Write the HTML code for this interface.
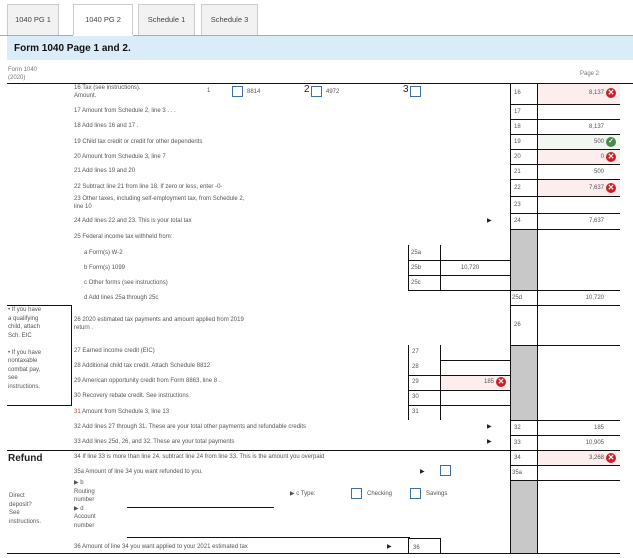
<!DOCTYPE html><html><head><style>
body{margin:0;width:633px;height:558px;background:#fff;font-family:"Liberation Sans",sans-serif;position:relative;overflow:hidden}
div{position:absolute;box-sizing:border-box}
.t{font-size:6px;color:#555;white-space:nowrap;line-height:8px}
.tab{top:4px;height:31px;background:#f2f2f2;border:1px solid #ccc;border-bottom:none;font-size:7.5px;color:#444;text-align:center;line-height:30px}
.hl{height:1px;background:#111}
.vl{width:1px;background:#111}
.gray{background:#c8c8c8}
.pink{background:#fdeeee}
.num{font-size:6px;color:#555;text-align:right;line-height:8px}
.x{width:10px;height:10px;border-radius:5px;background:#c8202a;color:#fff;font-size:8px;line-height:10px;text-align:center;font-weight:bold}
.ok{width:10px;height:10px;border-radius:5px;background:#4a8a4a;color:#fff;font-size:7px;line-height:10px;text-align:center;font-weight:bold}
.cb{width:11px;height:11px;border:1px solid #3a6fa8;background:#fff}
.arr{font-size:6px;color:#222;line-height:8px}
</style></head><body>
<div class="tab" style="left:7px;width:52px">1040 PG 1</div>
<div class="tab" style="left:73px;width:60px;background:#fff;height:32px">1040 PG 2</div>
<div class="tab" style="left:138px;width:57px">Schedule 1</div>
<div class="tab" style="left:201px;width:57px">Schedule 3</div>
<div style="left:0;top:35px;width:633px;height:1px;background:#aaa"></div>
<div style="left:73px;top:35px;width:60px;height:1px;background:#fff"></div>
<div style="left:7px;top:36px;width:626px;height:24px;background:#d9ecf8;font-size:10px;font-weight:bold;color:#111;padding:7px 0 0 7px">Form 1040 Page 1 and 2.</div>
<div class="t" style="left:8px;top:66px;color:#777">Form 1040<br>(2020)</div>
<div class="t" style="left:580px;top:70px;color:#777">Page 2</div>
<div class="hl" style="left:7px;top:83px;width:626px"></div>

<div class="vl" style="left:510px;top:83px;height:215px"></div>
<div class="vl" style="left:537px;top:83px;height:470px"></div>
<div class="vl" style="left:510px;top:290px;height:263px"></div>
<div class="pink" style="left:538px;top:84px;width:82px;height:20px"></div>
<div style="left:538px;top:135px;width:82px;height:14px;background:#f2f7f2"></div>
<div class="pink" style="left:538px;top:150px;width:82px;height:14px"></div>
<div class="pink" style="left:538px;top:180px;width:82px;height:16px"></div>
<div class="pink" style="left:538px;top:451px;width:82px;height:14px"></div>
<div class="gray" style="left:511px;top:230px;width:26px;height:60px"></div>
<div class="gray" style="left:511px;top:346px;width:26px;height:74px"></div>
<div class="gray" style="left:511px;top:481px;width:26px;height:72px"></div>

<div class="hl" style="left:510px;top:104px;width:110px"></div>
<div class="hl" style="left:510px;top:119px;width:110px"></div>
<div class="hl" style="left:510px;top:134px;width:110px"></div>
<div class="hl" style="left:510px;top:149px;width:110px"></div>
<div class="hl" style="left:510px;top:164px;width:110px"></div>
<div class="hl" style="left:510px;top:179px;width:110px"></div>
<div class="hl" style="left:510px;top:196px;width:110px"></div>
<div class="hl" style="left:510px;top:213px;width:110px"></div>
<div class="hl" style="left:510px;top:229px;width:110px"></div>
<div class="hl" style="left:408px;top:290px;width:212px"></div>
<div class="hl" style="left:510px;top:305px;width:110px"></div>
<div class="hl" style="left:510px;top:345px;width:110px"></div>
<div class="hl" style="left:510px;top:420px;width:110px"></div>
<div class="hl" style="left:510px;top:435px;width:110px"></div>
<div class="hl" style="left:7px;top:450px;width:613px"></div>
<div class="hl" style="left:510px;top:465px;width:110px"></div>
<div class="hl" style="left:510px;top:480px;width:110px"></div>
<div class="hl" style="left:7px;top:553px;width:613px"></div>

<div class="t" style="left:514px;top:89px">16</div><div class="num" style="left:540px;top:89px;width:64px">8,137</div><div class="x" style="left:606px;top:88px">✕</div>
<div class="t" style="left:514px;top:108px">17</div>
<div class="t" style="left:514px;top:123px">18</div><div class="num" style="left:540px;top:123px;width:64px">8,137</div>
<div class="t" style="left:514px;top:138px">19</div><div class="num" style="left:540px;top:138px;width:64px">500</div><div class="ok" style="left:606px;top:137px">✓</div>
<div class="t" style="left:514px;top:153px">20</div><div class="num" style="left:540px;top:153px;width:64px">0</div><div class="x" style="left:606px;top:152px">✕</div>
<div class="t" style="left:514px;top:168px">21</div><div class="num" style="left:540px;top:168px;width:64px">500</div>
<div class="t" style="left:514px;top:184px">22</div><div class="num" style="left:540px;top:184px;width:64px">7,637</div><div class="x" style="left:606px;top:183px">✕</div>
<div class="t" style="left:514px;top:201px">23</div>
<div class="t" style="left:514px;top:217px">24</div><div class="num" style="left:540px;top:217px;width:64px">7,637</div>
<div class="t" style="left:512px;top:294px">25d</div><div class="num" style="left:540px;top:294px;width:64px">10,720</div>
<div class="t" style="left:514px;top:321px">26</div>
<div class="t" style="left:514px;top:424px">32</div><div class="num" style="left:540px;top:424px;width:64px">185</div>
<div class="t" style="left:514px;top:439px">33</div><div class="num" style="left:540px;top:439px;width:64px">10,905</div>
<div class="t" style="left:514px;top:454px">34</div><div class="num" style="left:540px;top:454px;width:64px">3,268</div><div class="x" style="left:606px;top:453px">✕</div>
<div class="t" style="left:512px;top:469px">35a</div>

<div style="left:408px;top:245px;width:102px;height:45px;border-left:1px solid #111"></div>
<div class="vl" style="left:440px;top:245px;height:45px"></div>
<div class="hl" style="left:408px;top:260px;width:102px"></div>
<div class="hl" style="left:408px;top:275px;width:102px"></div>
<div class="t" style="left:411px;top:249px">25a</div>
<div class="t" style="left:411px;top:264px">25b</div><div class="num" style="left:440px;top:264px;width:60px;text-align:center">10,720</div>
<div class="t" style="left:411px;top:279px">25c</div>

<div class="vl" style="left:408px;top:345px;height:75px"></div>
<div class="vl" style="left:440px;top:345px;height:75px"></div>
<div class="pink" style="left:441px;top:376px;width:69px;height:14px"></div>
<div class="hl" style="left:440px;top:360px;width:70px"></div>
<div class="hl" style="left:408px;top:375px;width:102px"></div>
<div class="hl" style="left:408px;top:390px;width:102px"></div>
<div class="hl" style="left:408px;top:405px;width:102px"></div>
<div class="t" style="left:412px;top:348px">27</div>
<div class="t" style="left:412px;top:363px">28</div>
<div class="t" style="left:412px;top:378px">29</div><div class="num" style="left:440px;top:378px;width:54px">185</div><div class="x" style="left:496px;top:377px">✕</div>
<div class="t" style="left:412px;top:393px">30</div>
<div class="t" style="left:412px;top:408px">31</div>

<div style="left:408px;top:538px;width:33px;height:16px;border:1px solid #111;border-bottom:none"></div>
<div class="t" style="left:413px;top:544px">36</div>

<div style="left:7px;top:305px;width:65px;height:101px;border:1px solid #111;border-left:none"></div>
<div class="t" style="left:8px;top:306px;line-height:8.5px">• If you have<br>a qualifying<br>child, attach<br>Sch. EIC<br><br>• If you have<br>nontaxable<br>combat pay,<br>see<br>instructions.</div>
<div style="left:8px;top:453px;font-size:10px;font-weight:bold;color:#222">Refund</div>
<div class="t" style="left:9px;top:492px;line-height:8.5px">Direct<br>deposit?<br>See<br>instructions.</div>

<div class="t" style="left:74px;top:84px">16 Tax (see instructions).<br>Amount.</div>
<div class="t" style="left:207px;top:87px">1</div><div class="cb" style="left:232px;top:86px"></div><div class="t" style="left:247px;top:88px">8814</div>
<div style="left:304px;top:84px;font-size:10px;color:#222">2</div><div class="cb" style="left:311px;top:86px"></div><div class="t" style="left:326px;top:88px">4972</div>
<div style="left:403px;top:84px;font-size:10px;color:#222">3</div><div class="cb" style="left:410px;top:86px"></div>
<div class="t" style="left:74px;top:107px">17 Amount from Schedule 2, line 3 . . .</div>
<div class="t" style="left:74px;top:122px">18 Add lines 16 and 17 .</div>
<div class="t" style="left:74px;top:138px">19 Child tax credit or credit for other dependents</div>
<div class="t" style="left:74px;top:153px">20 Amount from Schedule 3, line 7</div>
<div class="t" style="left:74px;top:167px">21 Add lines 19 and 20</div>
<div class="t" style="left:74px;top:183px">22 Subtract line 21 from line 18. If zero or less, enter -0-</div>
<div class="t" style="left:74px;top:195px">23 Other taxes, including self-employment tax, from Schedule 2,<br>line 10</div>
<div class="t" style="left:74px;top:217px">24 Add lines 22 and 23. This is your total tax</div><div class="arr" style="left:487px;top:217px">▶</div>
<div class="t" style="left:74px;top:233px">25 Federal income tax withheld from:</div>
<div class="t" style="left:84px;top:249px">a Form(s) W-2</div>
<div class="t" style="left:84px;top:264px">b Form(s) 1099</div>
<div class="t" style="left:84px;top:279px">c Other forms (see instructions)</div>
<div class="t" style="left:84px;top:294px">d Add lines 25a through 25c</div>
<div class="t" style="left:74px;top:316px">26 2020 estimated tax payments and amount applied from 2019<br>return .</div>
<div class="t" style="left:74px;top:347px">27 Earned income credit (EIC)</div>
<div class="t" style="left:74px;top:362px">28 Additional child tax credit. Attach Schedule 8812</div>
<div class="t" style="left:74px;top:377px">29 American opportunity credit from Form 8863, line 8 .</div>
<div class="t" style="left:74px;top:392px">30 Recovery rebate credit. See instructions</div>
<div class="t" style="left:74px;top:408px"><span style="color:#b44">31</span> Amount from Schedule 3, line 13</div>
<div class="t" style="left:74px;top:423px">32 Add lines 27 through 31. These are your total other payments and refundable credits</div><div class="arr" style="left:487px;top:423px">▶</div>
<div class="t" style="left:74px;top:438px">33 Add lines 25d, 26, and 32. These are your total payments</div><div class="arr" style="left:487px;top:438px">▶</div>
<div class="t" style="left:74px;top:453px">34 If line 33 is more than line 24, subtract line 24 from line 33. This is the amount you overpaid</div>
<div class="t" style="left:74px;top:468px">35a Amount of line 34 you want refunded to you.</div><div class="arr" style="left:420px;top:468px">▶</div><div class="cb" style="left:440px;top:465px"></div>
<div class="t" style="left:74px;top:479px;line-height:8.5px">▶ b<br>Routing<br>number<br>▶ d<br>Account<br>number</div>
<div class="hl" style="left:127px;top:507px;width:147px"></div>
<div class="hl" style="left:127px;top:537px;width:283px"></div>
<div class="t" style="left:290px;top:490px">▶ c Type:</div>
<div class="cb" style="left:351px;top:488px"></div><div class="t" style="left:367px;top:490px">Checking</div>
<div class="cb" style="left:410px;top:488px"></div><div class="t" style="left:426px;top:490px">Savings</div>
<div class="t" style="left:74px;top:543px">36 Amount of line 34 you want applied to your 2021 estimated tax</div><div class="arr" style="left:387px;top:543px">▶</div>
</body></html>
